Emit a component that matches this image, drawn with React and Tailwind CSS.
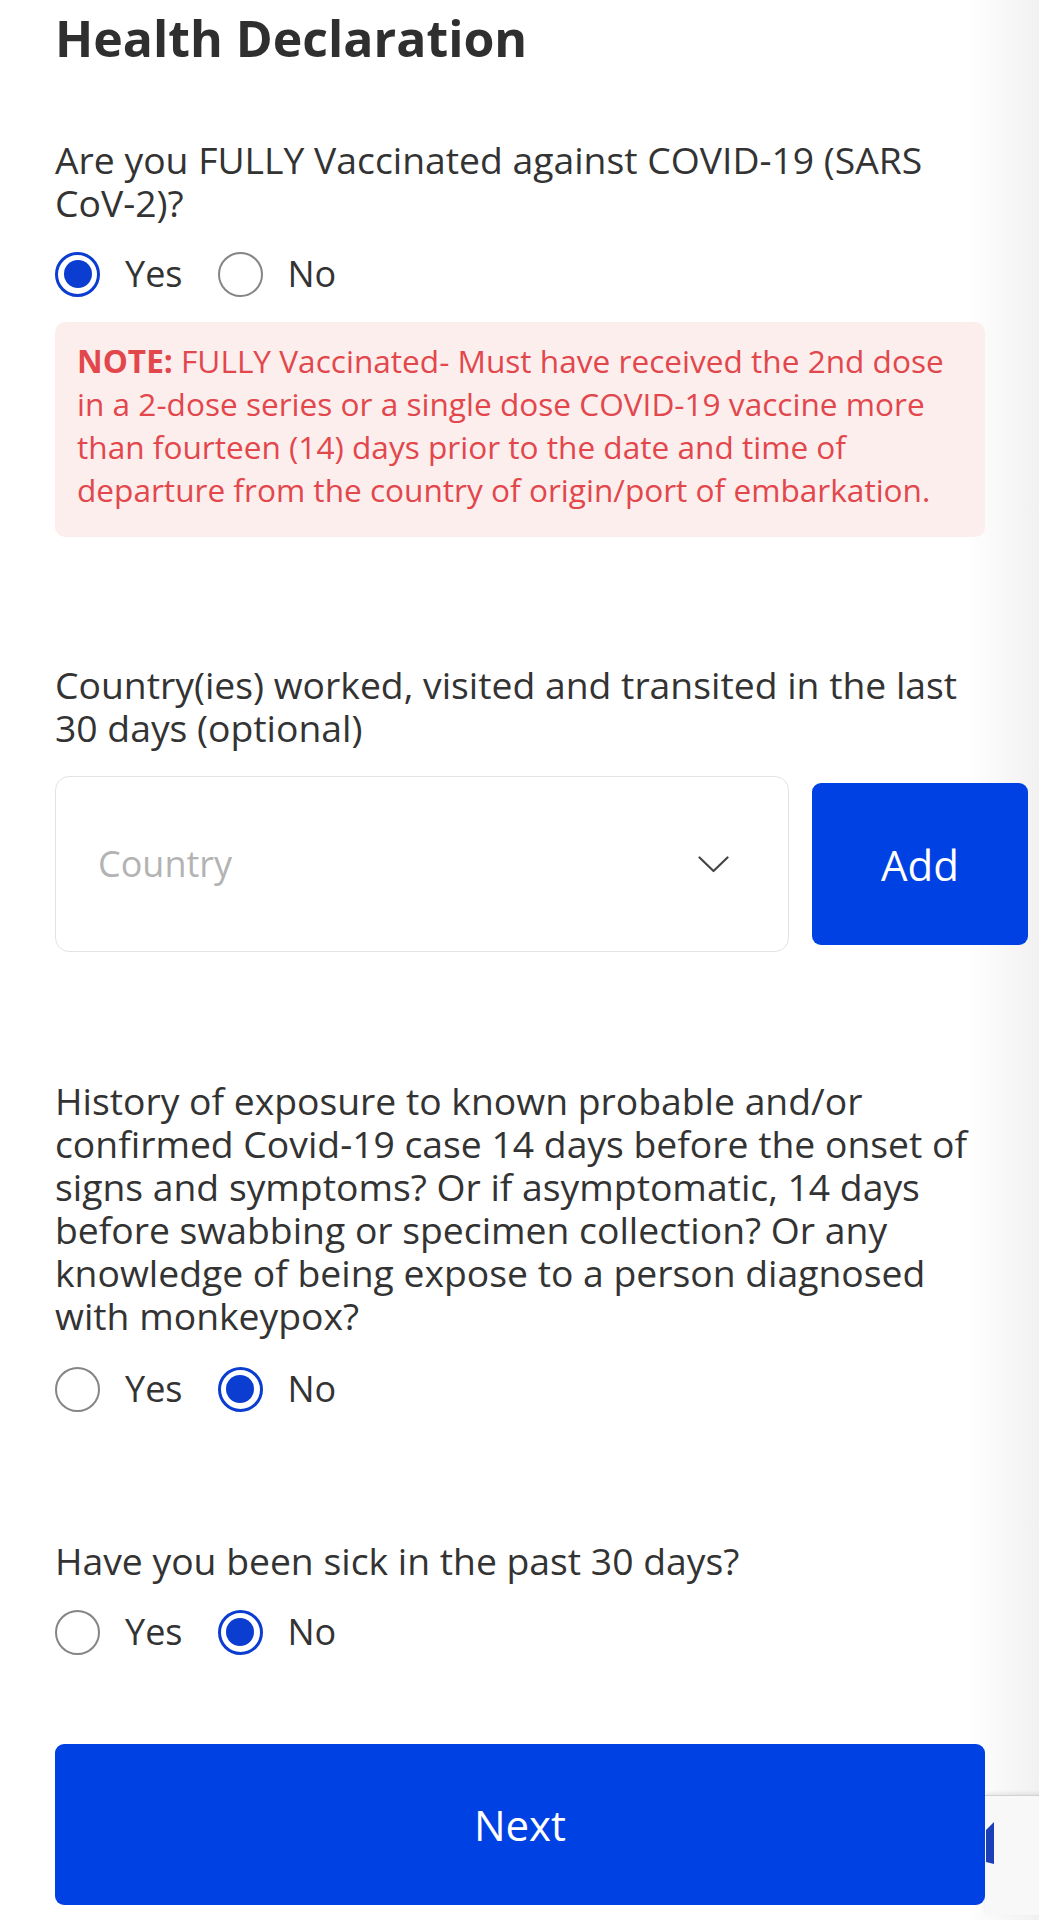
import React from "react";

function Radio({ checked }) {
  if (checked) {
    return (
      <span className="flex h-[45px] w-[45px] shrink-0 items-center justify-center rounded-full border-[3px] border-[#0a3dd0] bg-white">
        <span className="h-[28px] w-[28px] rounded-full bg-[#0a3dd0]" />
      </span>
    );
  }
  return <span className="block h-[45px] w-[45px] shrink-0 rounded-full border-[2.5px] border-[#858585] bg-white" />;
}

function RadioRow({ value, className }) {
  return (
    <div className={"flex h-[44px] items-center " + className}>
      <Radio checked={value === "yes"} />
      <span className="ml-[25px] text-[36px] leading-[44px] text-[#333]">Yes</span>
      <span className="ml-[35px]">
        <Radio checked={value === "no"} />
      </span>
      <span className="ml-[25px] text-[36px] leading-[44px] text-[#333]">No</span>
    </div>
  );
}

function Lines({ lines, className }) {
  return (
    <p className={"whitespace-nowrap " + className}>
      {lines.map((l, i) => (
        <React.Fragment key={i}>
          {i > 0 && <br />}
          {l}
        </React.Fragment>
      ))}
    </p>
  );
}

export default function App() {
  return (
    <div className="relative h-[1920px] w-[1039px] overflow-hidden bg-[linear-gradient(to_right,#ffffff_0px,#ffffff_965px,#f1f1f1_1039px)] font-['Open_Sans',sans-serif]">
      <div className="flex w-[985px] flex-col pl-[55px]">
        <h1 className="mt-[8px] text-[50px] font-bold leading-[60px] text-[#2f2f2f]">Health Declaration</h1>

        <Lines
          className="mt-[70px] text-[37.3px] leading-[43px] text-[#333]"
          lines={["Are you FULLY Vaccinated against COVID-19 (SARS", "CoV-2)?"]}
        />
        <RadioRow value="yes" className="mt-[28px]" />

        <p className="mt-[26px] whitespace-nowrap rounded-[10px] bg-[#fdeeee] pb-[26px] pl-[22px] pt-[17px] text-[31.6px] leading-[43px] text-[#e2474c]">
          <span className="font-bold">NOTE:</span> FULLY Vaccinated- Must have received the 2nd dose
          <br />
          in a 2-dose series or a single dose COVID-19 vaccine more
          <br />
          than fourteen (14) days prior to the date and time of
          <br />
          departure from the country of origin/port of embarkation.
        </p>

        <Lines
          className="mt-[126px] text-[37.3px] leading-[43px] text-[#333]"
          lines={["Country(ies) worked, visited and transited in the last", "30 days (optional)"]}
        />

        <div className="mt-[27px] flex w-[973px] items-center">
          <div className="flex h-[176px] w-[734px] items-center justify-between rounded-[14px] border-[1.5px] border-[#e3e3e3] bg-white pl-[42px] pr-[59px]">
            <span className="text-[36px] text-[#b3b3b3]">Country</span>
            <svg width="31" height="17" viewBox="0 0 31 17" fill="none">
              <polyline points="1.5,1.5 15.5,15 29.5,1.5" stroke="#454545" strokeWidth="2.2" strokeLinecap="round" strokeLinejoin="round" />
            </svg>
          </div>
          <button className="ml-[23px] flex h-[162px] w-[216px] items-center justify-center rounded-[9px] bg-[#0041e3] text-[42px] text-white">
            Add
          </button>
        </div>

        <Lines
          className="mt-[127px] text-[37.3px] leading-[43px] text-[#333]"
          lines={[
            "History of exposure to known probable and/or",
            "confirmed Covid-19 case 14 days before the onset of",
            "signs and symptoms? Or if asymptomatic, 14 days",
            "before swabbing or specimen collection? Or any",
            "knowledge of being expose to a person diagnosed",
            "with monkeypox?",
          ]}
        />
        <RadioRow value="no" className="mt-[30px]" />

        <Lines className="mt-[128px] text-[37.3px] leading-[43px] text-[#333]" lines={["Have you been sick in the past 30 days?"]} />
        <RadioRow value="no" className="mt-[28px]" />

        <button className="relative z-10 mt-[90px] flex h-[161px] w-[930px] items-center justify-center rounded-[9px] bg-[#0041e3] text-[42px] text-white">
          Next
        </button>
      </div>

      <div className="absolute left-[985px] top-[1795px] h-[120px] w-[80px] border-t border-[#d2d2d2] bg-[#f8f8f8] shadow-[0_-2px_4px_rgba(0,0,0,0.08)]">
        <svg className="absolute left-0 top-[26px]" width="10" height="44" viewBox="0 0 10 44">
          <polygon points="1,8 9,0 9,42 1,40" fill="#1c3fb8" />
        </svg>
      </div>
    </div>
  );
}
